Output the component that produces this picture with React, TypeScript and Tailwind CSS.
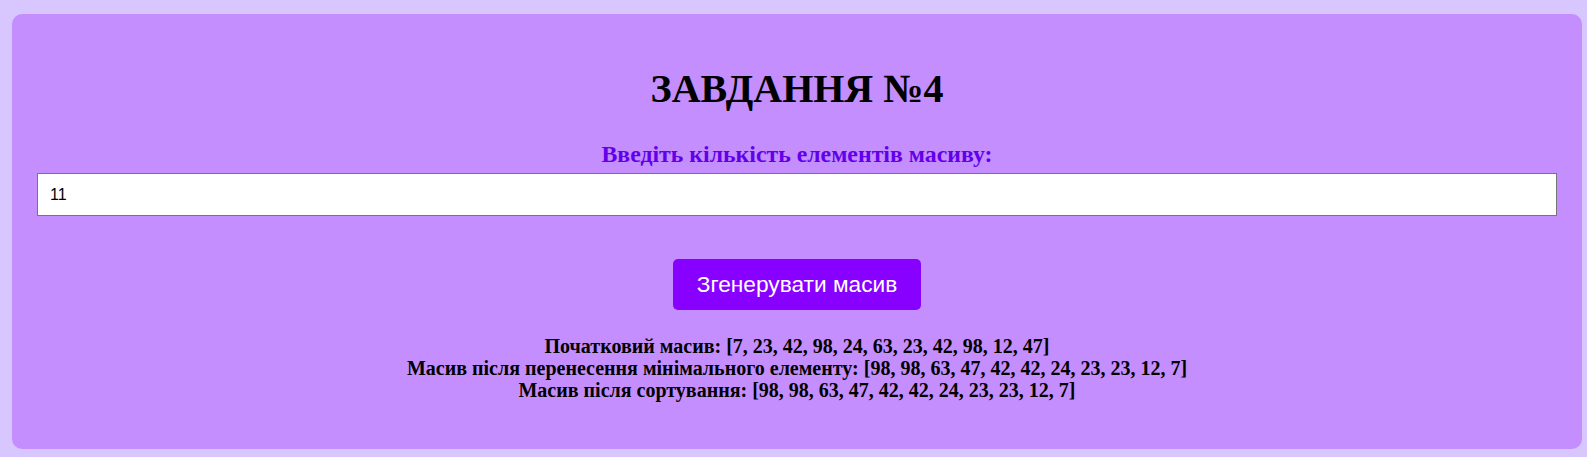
const initial = [7, 23, 42, 98, 24, 63, 23, 42, 98, 12, 47];
const moved = [98, 98, 63, 47, 42, 42, 24, 23, 23, 12, 7];
const sorted = [98, 98, 63, 47, 42, 42, 24, 23, 23, 12, 7];

const fmt = (arr: number[]) => `[${arr.join(", ")}]`;

export default function App() {
  return (
    <div className="h-[457px] w-full bg-[#d8c7ff] pl-[12px] pr-[5px] pt-[14px] pb-[8px]">
      <div className="flex flex-col items-center rounded-[10px] bg-[#c48eff] px-[25px] pt-[52px] pb-[48px] font-['Liberation_Serif',serif]">
        <h1 className="text-[40px] font-bold leading-[46px] text-black">
          ЗАВДАННЯ №4
        </h1>
        <label
          htmlFor="count"
          className="mt-[28px] text-[23.8px] font-bold leading-[28px] text-[#6200ea]"
        >
          Введіть кількість елементів масиву:
        </label>
        <input
          id="count"
          type="number"
          defaultValue={11}
          className="mt-[5px] h-[43px] w-full border border-[#767676] bg-white px-[12px] font-['Liberation_Sans',Arial,sans-serif] text-[16px] text-black outline-none"
        />
        <button className="mt-[43px] h-[51px] rounded-[5px] bg-[#8800ff] px-[24px] font-['Liberation_Sans',Arial,sans-serif] text-[22.7px] text-white">
          Згенерувати масив
        </button>
        <div className="mt-[25px] text-center text-[20px] font-bold leading-[22px] text-black">
          <div>Початковий масив: {fmt(initial)}</div>
          <div>Масив після перенесення мінімального елементу: {fmt(moved)}</div>
          <div>Масив після сортування: {fmt(sorted)}</div>
        </div>
      </div>
    </div>
  );
}
